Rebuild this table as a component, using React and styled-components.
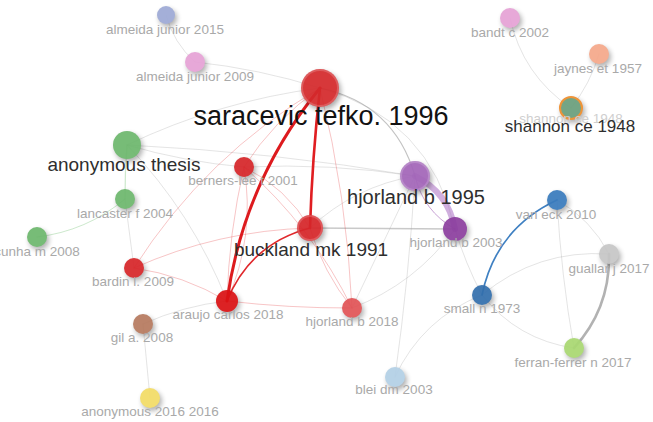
import React from "react";
import styled, { createGlobalStyle } from "styled-components";

const GlobalStyle = createGlobalStyle`
  html, body {
    margin: 0;
    padding: 0;
    background: #ffffff;
  }
  body {
    font-family: "Liberation Sans", Arial, sans-serif;
  }
`;

// node positions are the content of the map (VOSviewer style co-citation layout)
const NODES = {
  sar: { x: 320, y: 88, r: 19, color: "#d42a2c", halo: true },
  aj15: { x: 166, y: 15, r: 9, color: "#9eaad6" },
  aj09: { x: 195, y: 62, r: 10, color: "#e6a2d6" },
  anon: { x: 127, y: 145, r: 14, color: "#6db76d" },
  bern: { x: 244, y: 167, r: 10, color: "#d6262a" },
  lanc: { x: 125, y: 199, r: 10, color: "#6db76d" },
  cun: { x: 37, y: 237, r: 10, color: "#6db76d" },
  bard: { x: 134, y: 268, r: 10, color: "#d7262a" },
  arau: { x: 227, y: 301, r: 11, color: "#da1214" },
  gil: { x: 143, y: 324, r: 10, color: "#b67a5f" },
  a16: { x: 150, y: 398, r: 10, color: "#f3dc66" },
  buck: { x: 310, y: 228, r: 13, color: "#d6262a", halo: true },
  h18: { x: 352, y: 308, r: 10, color: "#e15457" },
  blei: { x: 395, y: 377, r: 10, color: "#b3d0e6" },
  h95: { x: 415, y: 176, r: 15, color: "#a366b9", halo: true },
  h03: { x: 455, y: 229, r: 12, color: "#8c3f9f" },
  vane: { x: 557, y: 200, r: 10, color: "#3a7bbd" },
  gual: { x: 609, y: 254, r: 10, color: "#c6c6c6" },
  small: { x: 482, y: 295, r: 10, color: "#336fad" },
  ferr: { x: 574, y: 348, r: 10, color: "#a9d872" },
  bandt: { x: 510, y: 18, r: 10, color: "#e6a2d6" },
  jay: { x: 599, y: 54, r: 10, color: "#f5a88a" },
  shan: { x: 571, y: 108, r: 12, color: "#6a9f7c", ring: "#ee8c2a" },
};

const RED = "rgba(226, 30, 34, 0.26)";
const GREY = "rgba(150, 150, 150, 0.26)";
const GREEN = "rgba(110, 190, 110, 0.35)";

// [from, to, width, stroke, curvature]
const EDGES = [
  ["aj15", "aj09", 1, GREY, 0.15],
  ["aj09", "sar", 1, GREY, -0.05],
  ["anon", "sar", 1, GREY, -0.08],
  ["anon", "bern", 1, GREY, 0.05],
  ["anon", "arau", 1, GREY, -0.1],
  ["anon", "h95", 1, GREY, -0.03],
  ["bern", "h95", 1, GREY, -0.05],
  ["anon", "lanc", 1.2, GREEN, 0.02],
  ["lanc", "cun", 1, GREEN, -0.15],
  ["lanc", "bard", 1, GREY, 0],
  ["gil", "arau", 1, GREY, -0.08],
  ["gil", "a16", 1, GREY, 0],
  ["sar", "h95", 1.2, "rgba(120,120,120,0.45)", -0.3],
  ["sar", "h03", 1, GREY, -0.3],
  ["buck", "h03", 1.3, "rgba(120,120,120,0.4)", 0],
  ["buck", "h95", 1, GREY, -0.15],
  ["h18", "h95", 1, GREY, 0],
  ["h18", "h03", 1, GREY, 0.15],
  ["blei", "h95", 1, GREY, 0.02],
  ["blei", "small", 1, GREY, -0.2],
  ["h03", "small", 1, GREY, 0.05],
  ["small", "gual", 1, GREY, -0.2],
  ["small", "ferr", 1, GREY, 0.2],
  ["vane", "ferr", 1, GREY, 0.03],
  ["vane", "gual", 1, GREY, -0.15],
  ["bandt", "shan", 1, GREY, 0.2],
  ["jay", "shan", 1, GREY, -0.1],
  ["sar", "bern", 1, RED, 0.1],
  ["sar", "bard", 1, RED, 0.12],
  ["sar", "h18", 1, RED, -0.05],
  ["bern", "arau", 1, RED, 0.05],
  ["bern", "buck", 1, RED, -0.15],
  ["bern", "h18", 1, RED, -0.1],
  ["bard", "arau", 1, RED, -0.1],
  ["bard", "buck", 1, RED, -0.1],
  ["arau", "h18", 1, RED, 0.03],
  ["buck", "h18", 1, RED, 0.1],
  ["arau", "bern", 1, RED, 0.15],
  ["gual", "ferr", 2.6, "rgba(165,165,165,0.85)", -0.2],
  ["small", "vane", 1.7, "#3f80c2", -0.25],
  ["h95", "h03", 1, "rgba(163,102,185,0.6)", 0.22],
  ["h95", "h03", 6, "rgba(170,110,195,0.55)", -0.25],
  ["buck", "arau", 1.6, "#e0282c", 0.25],
  ["sar", "buck", 2.6, "#e01e22", 0.02],
  ["sar", "arau", 3, "#dd1a1e", 0.14],
];

const LABELS = [
  { text: "almeida junior 2015", x: 165, y: 30, kind: "minor" },
  { text: "almeida junior 2009", x: 195, y: 77, kind: "minor" },
  { text: "bandt c 2002", x: 510, y: 33, kind: "minor" },
  { text: "jaynes et 1957", x: 598, y: 69, kind: "minor" },
  { text: "shannon ce 1948", x: 571, y: 119, kind: "ghost" },
  { text: "berners-lee t 2001", x: 243, y: 181, kind: "minor" },
  { text: "lancaster f 2004", x: 125, y: 214, kind: "minor" },
  { text: "cunha m 2008", x: 37, y: 252, kind: "minor" },
  { text: "bardin l. 2009", x: 133, y: 282, kind: "minor" },
  { text: "araujo carlos 2018", x: 228, y: 315, kind: "minor" },
  { text: "gil a. 2008", x: 142, y: 338, kind: "minor" },
  { text: "anonymous 2016 2016", x: 150, y: 412, kind: "minor" },
  { text: "hjorland b 2018", x: 352, y: 322, kind: "minor" },
  { text: "blei dm 2003", x: 394, y: 390, kind: "minor" },
  { text: "hjorland b 2003", x: 456, y: 243, kind: "minor" },
  { text: "van eck 2010", x: 556, y: 215, kind: "minor" },
  { text: "guallar j 2017", x: 609, y: 269, kind: "minor" },
  { text: "small n 1973", x: 482, y: 309, kind: "minor" },
  { text: "ferran-ferrer n 2017", x: 573, y: 363, kind: "minor" },
  { text: "shannon ce 1948", x: 570, y: 126, kind: "mid", size: 17 },
  { text: "anonymous thesis", x: 124, y: 164, kind: "mid", size: 19 },
  { text: "buckland mk 1991", x: 311, y: 249, kind: "mid", size: 19 },
  { text: "hjorland b 1995", x: 416, y: 197, kind: "mid", size: 20 },
  { text: "saracevic tefko. 1996", x: 321, y: 116, kind: "major", size: 27 },
];

const TONES = {
  ghost: "#cfcfcf",
  minor: "#a9a9a9",
  mid: "#2e2e2e",
  major: "#121212",
};

const Canvas = styled.div`
  position: relative;
  width: 653px;
  height: 422px;
  overflow: hidden;
  background: #ffffff;
`;

const EdgeLayer = styled.svg`
  position: absolute;
  inset: 0;
  width: 100%;
  height: 100%;
`;

const Node = styled.div.attrs((p) => ({
  style: {
    left: p.$x - p.$r,
    top: p.$y - p.$r,
    width: p.$r * 2,
    height: p.$r * 2,
  },
}))`
  position: absolute;
  box-sizing: border-box;
  border-radius: 50%;
  background: ${(p) => p.$color};
  border: ${(p) => (p.$ring ? `2px solid ${p.$ring}` : "none")};
  opacity: 0.93;
  box-shadow: ${(p) =>
    p.$halo
      ? `inset 0 0 0 2px rgba(255,255,255,0.18), 2px 3px 5px rgba(0,0,0,0.35)`
      : `2px 3px 5px rgba(0,0,0,0.33)`};
`;

const Label = styled.span.attrs((p) => ({
  style: { left: p.$x, top: p.$y },
}))`
  position: absolute;
  transform: translate(-50%, -50%);
  white-space: nowrap;
  line-height: 1;
  font-family: "Liberation Sans", Arial, sans-serif;
  font-size: ${(p) => p.$size || 13.5}px;
  color: ${(p) => TONES[p.$kind]};
`;

function edgePath(a, b, curve) {
  const cx = (a.x + b.x) / 2 - (b.y - a.y) * curve;
  const cy = (a.y + b.y) / 2 + (b.x - a.x) * curve;
  return `M${a.x} ${a.y} Q${cx} ${cy} ${b.x} ${b.y}`;
}

const App = () => {
  return (
    <>
      <GlobalStyle />
      <Canvas>
        <EdgeLayer viewBox="0 0 653 422">
          {EDGES.map(([from, to, width, stroke, curve], i) => (
            <path
              key={i}
              d={edgePath(NODES[from], NODES[to], curve)}
              fill="none"
              stroke={stroke}
              strokeWidth={width}
              strokeLinecap="round"
            />
          ))}
        </EdgeLayer>
        {Object.entries(NODES).map(([id, n]) => (
          <Node
            key={id}
            $x={n.x}
            $y={n.y}
            $r={n.r}
            $color={n.color}
            $ring={n.ring}
            $halo={n.halo}
          />
        ))}
        {LABELS.map((l, i) => (
          <Label key={i} $x={l.x} $y={l.y} $size={l.size} $kind={l.kind}>
            {l.text}
          </Label>
        ))}
      </Canvas>
    </>
  );
};

export default App;
